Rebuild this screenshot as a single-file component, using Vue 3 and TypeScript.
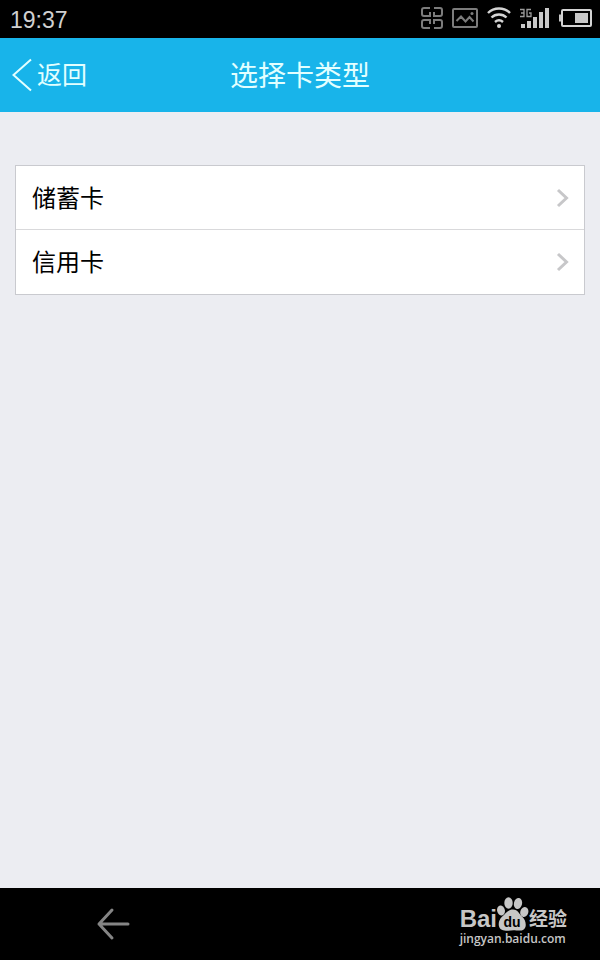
<script setup lang="ts">
interface CardType {
  id: string
  name: string
}

const cardTypes: CardType[] = [
  { id: 'debit', name: '储蓄卡' },
  { id: 'credit', name: '信用卡' },
]
</script>

<template>
  <div class="screen">
    <div class="status-bar">
      <time class="clock">19:37</time>
      <div class="status-icons">
        <svg width="22" height="22" viewBox="0 0 22 22" fill="none" stroke="#7c7c7c" stroke-width="2">
          <path d="M9 1H3a2 2 0 0 0-2 2v4a2 2 0 0 0 2 2h6V5" />
          <path d="M13 1h6a2 2 0 0 1 2 2v4a2 2 0 0 1-2 2h-6V5" />
          <path d="M9 17v-4H3a2 2 0 0 0-2 2v4a2 2 0 0 0 2 2h6" />
          <path d="M13 17v-4h6a2 2 0 0 1 2 2v4a2 2 0 0 1-2 2h-6" />
        </svg>
        <svg width="26" height="20" viewBox="0 0 26 20" fill="none" stroke="#7c7c7c" stroke-width="2">
          <rect x="1" y="1" width="24" height="18" rx="1" />
          <path d="M4.500 13L9 8.500l4.500 5 4-4.500 4 4.500" />
          <circle cx="20" cy="5.500" r="1.500" fill="#7c7c7c" stroke="none" />
        </svg>
        <svg width="24" height="22" viewBox="0 0 24 22" fill="none" stroke="#d4d4d4" stroke-width="2.400">
          <path d="M1 6C7 0 17 0 23 6M4.500 10.500c4-4 11-4 15 0M8 15c2.500-2.300 5.500-2.300 8 0" />
          <circle cx="12" cy="19" r="2" fill="#d4d4d4" stroke="none" />
        </svg>
        <svg width="29" height="20" viewBox="0 0 29 20" fill="#c8c8c8">
          <path d="M1 16h4v4H1zM7 13h4v7H7zM13 9h4v11h-4zM19 4h4v16h-4zM25 0h4v20h-4z" />
          <path d="M0 1.500h4v7H0M1 5h3M11 1.500H7v7h4V5H9" fill="none" stroke="#9c9c9c" stroke-width="1.300" />
        </svg>
        <svg width="34" height="18" viewBox="0 0 34 18">
          <path d="M5 1h27a1 1 0 0 1 1 1v14a1 1 0 0 1-1 1H5a1 1 0 0 1-1-1V2a1 1 0 0 1 1-1z" fill="none" stroke="#d4d4d4" stroke-width="2" />
          <path d="M1 5.500h2v7H1zM17 4h13v10H17z" fill="#c8c8c8" />
        </svg>
      </div>
    </div>

    <header class="title-bar">
      <button class="back" type="button">
        <svg width="20" height="34" viewBox="0 0 20 34" fill="none" stroke="currentColor" stroke-width="2">
          <path d="M19 1.500L1.500 17l17.500 15.500" />
        </svg>
        <span>返回</span>
      </button>
      <h1 class="title">选择卡类型</h1>
    </header>

    <main class="content">
      <ul class="card-list">
        <li v-for="card in cardTypes" :key="card.id" class="card-item">
          <button class="card-button" type="button">
            <span class="card-name">{{ card.name }}</span>
            <svg width="14" height="20" viewBox="0 0 14 20" fill="none" stroke="#c7c7c9" stroke-width="3">
              <path d="M2 2l8.500 8L2 18" />
            </svg>
          </button>
        </li>
      </ul>
    </main>

    <footer class="nav-bar">
      <button class="nav-back" type="button" aria-label="返回">
        <svg width="34" height="34" viewBox="0 0 34 34" fill="none" stroke="#858585" stroke-width="3" stroke-linecap="round" stroke-linejoin="round">
          <path d="M16 3L3 17l13 14M3 17h29" />
        </svg>
      </button>
      <div class="brand">
        <div class="brand-name">
          <span class="brand-latin">Bai</span>
          <svg width="32" height="34" viewBox="0 0 32 34" fill="#c6c6c6">
            <ellipse cx="4" cy="13.500" rx="3.900" ry="5" transform="rotate(-12 4 13.500)" />
            <ellipse cx="11.500" cy="6" rx="4.200" ry="5.700" />
            <ellipse cx="21" cy="6.500" rx="4.100" ry="5.600" transform="rotate(12 21 6.500)" />
            <ellipse cx="27.300" cy="15" rx="4" ry="5" transform="rotate(18 27.300 15)" />
            <path d="M16 12.500c5 0 6 4.500 9 7 5 4.500 5.500 13.500-1.500 14-3 .3-4.500-.3-7-.3s-5.500.8-9 .3C0 32.500.500 24 5 19.800 9 16.500 11 12.500 16 12.500z" />
            <text class="paw-text" x="15" y="30" text-anchor="middle">du</text>
          </svg>
          <span class="brand-cjk">经验</span>
        </div>
        <div class="brand-url">jingyan.baidu.com</div>
      </div>
    </footer>
  </div>
</template>

<style>
body {
  margin: 0;
}
</style>

<style scoped>
.screen {
  display: flex;
  flex-direction: column;
  min-height: 100vh;
  background: #ecedf2;
  color: #000;
  font-family: "Liberation Sans", "Noto Sans CJK SC", sans-serif;
}

svg {
  display: block;
  flex: none;
}

button {
  margin: 0;
  padding: 0;
  border: 0;
  background: none;
  color: inherit;
  font: inherit;
  cursor: pointer;
}

.status-bar {
  display: flex;
  align-items: center;
  justify-content: space-between;
  box-sizing: border-box;
  height: 38px;
  padding: 0 8px 2px 10px;
  background: #000;
}

.clock {
  padding-top: 4px;
  color: #d0d0d0;
  font-size: 23px;
  line-height: 32px;
}

.status-icons {
  display: flex;
  align-items: center;
  gap: 9px;
}

.title-bar {
  display: grid;
  grid-template-columns: 1fr auto 1fr;
  align-items: center;
  height: 74px;
  background: #18b4ea;
  color: #e2ffff;
}

.back {
  display: flex;
  align-items: center;
  justify-self: start;
  gap: 5px;
  padding-left: 12px;
  font-size: 25px;
  line-height: 36px;
}

.title {
  margin: 0;
  padding-top: 4px;
  font-size: 28px;
  font-weight: 400;
  line-height: 40px;
}

.content {
  flex: 1;
  padding: 53px 15px;
}

.card-list {
  margin: 0;
  padding: 0;
  border: 1px solid #c9cacf;
  background: #fff;
  list-style: none;
}

.card-item {
  box-sizing: border-box;
  height: 64px;
}

.card-item:not(:last-child) {
  border-bottom: 1px solid #d9d9db;
}

.card-button {
  display: flex;
  align-items: center;
  justify-content: space-between;
  width: 100%;
  height: 100%;
  padding: 0 14px 0 16px;
  font-size: 24px;
  line-height: 36px;
}

.card-name {
  padding-top: 2px;
}

.nav-bar {
  display: flex;
  align-items: center;
  justify-content: space-between;
  height: 72px;
  padding: 0 33px 0 96px;
  background: #000;
}

.brand {
  padding-bottom: 5px;
  color: #c6c6c6;
}

.brand-name {
  display: flex;
  align-items: flex-end;
  height: 34px;
  font-weight: 700;
}

.brand-latin {
  font-size: 24px;
  line-height: 24px;
}

.paw-text {
  fill: #000;
  font-size: 14px;
  font-weight: 700;
}

.brand-cjk {
  font-size: 19px;
  line-height: 22px;
}

.brand-url {
  font-family: "Open Sans", sans-serif;
  font-size: 12px;
  font-weight: 600;
  line-height: 16px;
}
</style>
